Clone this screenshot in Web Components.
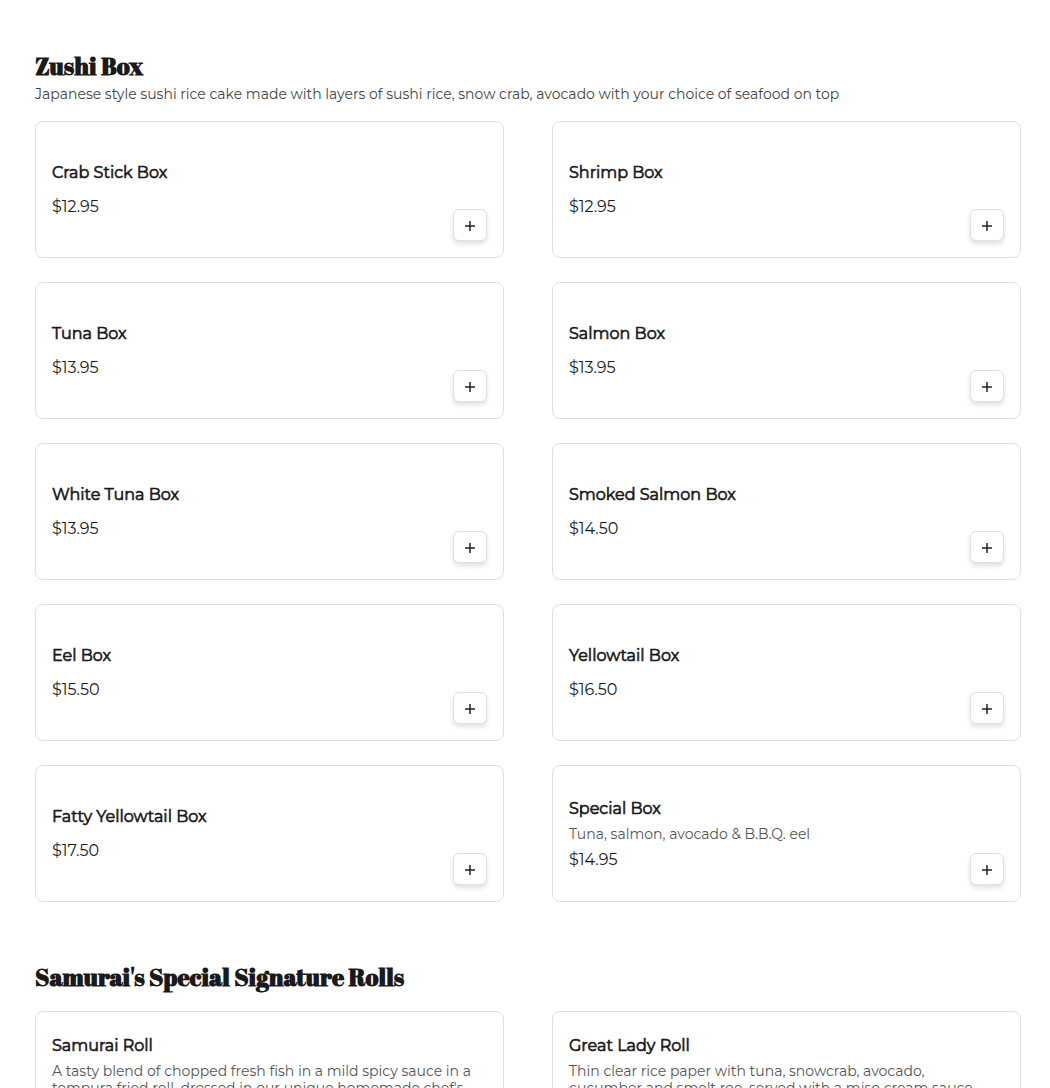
<!DOCTYPE html>
<html lang="en">
<head>
<meta charset="utf-8">
<meta name="viewport" content="width=device-width, initial-scale=1">
<title>Menu</title>
<style>
  html { background: #fff; }
  body {
    margin: 0;
    height: 100vh;
    overflow: hidden;
    color: #1a1a1a;
    font-family: Montserrat, Inter, "Open Sans", sans-serif;
    font-size: 16px;
    line-height: 18px;
  }
</style>
</head>
<body>
<menu-page>
  <menu-section heading="Zushi Box" description="Japanese style sushi rice cake made with layers of sushi rice, snow crab, avocado with your choice of seafood on top">
    <menu-item name="Crab Stick Box" price="$12.95"></menu-item>
    <menu-item name="Shrimp Box" price="$12.95"></menu-item>
    <menu-item name="Tuna Box" price="$13.95"></menu-item>
    <menu-item name="Salmon Box" price="$13.95"></menu-item>
    <menu-item name="White Tuna Box" price="$13.95"></menu-item>
    <menu-item name="Smoked Salmon Box" price="$14.50"></menu-item>
    <menu-item name="Eel Box" price="$15.50"></menu-item>
    <menu-item name="Yellowtail Box" price="$16.50"></menu-item>
    <menu-item name="Fatty Yellowtail Box" price="$17.50"></menu-item>
    <menu-item name="Special Box" price="$14.95">Tuna, salmon, avocado &amp; B.B.Q. eel</menu-item>
  </menu-section>
  <menu-section heading="Samurai's Special Signature Rolls">
    <menu-item name="Samurai Roll">A tasty blend of chopped fresh fish in a mild spicy sauce in a<br>tempura fried roll, dressed in our unique homemade chef's</menu-item>
    <menu-item name="Great Lady Roll">Thin clear rice paper with tuna, snowcrab, avocado,<br>cucumber and smelt roe, served with a miso cream sauce</menu-item>
  </menu-section>
</menu-page>

<template id="menu-page">
  <style>
    :host { display: flex; flex-direction: column; gap: 59px; padding: 50px 29px 50px 35px; }
  </style>
  <slot></slot>
</template>

<template id="menu-section">
  <style>
    :host { display: block; }
    header { display: flex; flex-direction: column; gap: 3px; margin-bottom: 18px; }
    h2 {
      margin: 0;
      font-family: "Abril Fatface", "Liberation Serif", serif;
      font-size: 24px;
      line-height: 32px;
      font-weight: 700;
    }
    p { margin: 0; font-size: 14px; line-height: 18px; color: #444; }
    .items { display: grid; grid-template-columns: repeat(2, minmax(0, 1fr)); gap: 24px 48px; }
  </style>
  <header><h2></h2><p></p></header>
  <div class="items"><slot></slot></div>
</template>

<template id="menu-item">
  <style>
    :host {
      display: grid;
      box-sizing: border-box;
      min-height: 137px;
      padding: 17px 16px 16px;
      border: 1px solid #e0e0e0;
      border-radius: 8px;
    }
    .info, add-button { grid-area: 1 / 1; }
    .info { align-self: center; display: flex; flex-direction: column; gap: 8px; }
    add-button { place-self: end; }
    h3, p { margin: 0; }
    h3 { font-size: 16px; line-height: 18px; font-weight: 400; -webkit-text-stroke: .04em currentColor; }
    .description { font-size: 14px; line-height: 17px; color: #555; }
    .price { min-height: 18px; }
  </style>
  <div class="info">
    <h3></h3>
    <p class="description"><slot></slot></p>
    <p class="price"></p>
  </div>
  <add-button></add-button>
</template>

<template id="add-button">
  <style>
    :host { display: block; }
    button {
      display: grid;
      place-items: center;
      box-sizing: border-box;
      width: 34px;
      height: 32px;
      padding: 2px 0 0;
      border: 1px solid #e0e0e0;
      border-radius: 6px;
      background: #fff;
      color: #222;
      box-shadow: 0 3px 5px rgba(0, 0, 0, .12);
      cursor: pointer;
    }
    svg { display: block; }
  </style>
  <button type="button">
    <svg width="10" height="10" viewBox="0 0 10 10" fill="none" stroke="currentColor" stroke-width="1.5" aria-hidden="true"><path d="M5 0v10M0 5h10"/></svg>
  </button>
</template>

<script>
  class TemplateElement extends HTMLElement {
    constructor() {
      super();
      const template = document.getElementById(this.localName);
      this.attachShadow({ mode: "open" }).append(template.content.cloneNode(true));
    }
    find(selector) { return this.shadowRoot.querySelector(selector); }
  }

  class AddButton extends TemplateElement {
    connectedCallback() {
      this.find("button").setAttribute("aria-label", this.getAttribute("label") || "Add");
    }
  }

  class MenuItem extends TemplateElement {
    connectedCallback() {
      const name = this.getAttribute("name");
      this.find("h3").textContent = name;
      this.find(".price").textContent = this.getAttribute("price") || "";
      this.find("add-button").setAttribute("label", "Add " + name);
    }
  }

  class MenuSection extends TemplateElement {
    connectedCallback() {
      this.find("h2").textContent = this.getAttribute("heading");
      const text = this.getAttribute("description");
      if (text) this.find("p").textContent = text;
      else this.find("p").remove();
    }
  }

  class MenuPage extends TemplateElement {}

  customElements.define("menu-page", MenuPage);
  customElements.define("menu-section", MenuSection);
  customElements.define("menu-item", MenuItem);
  customElements.define("add-button", AddButton);
</script>
</body>
</html>
